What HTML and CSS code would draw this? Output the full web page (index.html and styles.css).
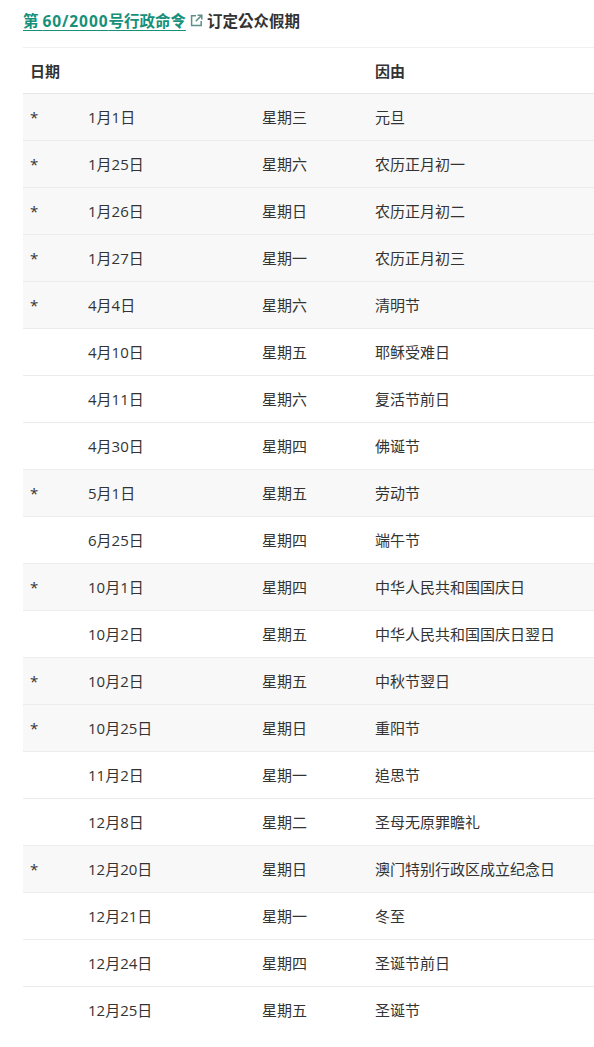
FILE: index.html
```html
<!DOCTYPE html>
<html lang="zh-Hant">
<head>
<meta charset="utf-8">
<link rel="stylesheet" href="styles.css">
</head>
<body>
<div class="page">
  <div class="title">
    <a class="law" href="#">第 <span class="num">60/2000</span>号行政命令</a><svg class="ext" viewBox="0 0 13 13" width="13" height="13"><path d="M6 1.8H1.6v9.6h9.6V7" fill="none" stroke="currentColor" stroke-width="1.5"/><path d="M7.6 1.2h4.2v4.2" fill="none" stroke="currentColor" stroke-width="1.5"/><path d="M11.6 1.4L5.8 7.2" stroke="currentColor" stroke-width="1.5"/></svg><span class="rest">订定公众假期</span>
  </div>
  <table class="holidays">
    <colgroup>
      <col class="c1"><col class="c2"><col class="c3"><col class="c4">
    </colgroup>
    <thead>
      <tr><th colspan="3">日期</th><th>因由</th></tr>
    </thead>
    <tbody>
      <tr class="hl"><td>*</td><td>1月1日</td><td>星期三</td><td>元旦</td></tr>
      <tr class="hl"><td>*</td><td>1月25日</td><td>星期六</td><td>农历正月初一</td></tr>
      <tr class="hl"><td>*</td><td>1月26日</td><td>星期日</td><td>农历正月初二</td></tr>
      <tr class="hl"><td>*</td><td>1月27日</td><td>星期一</td><td>农历正月初三</td></tr>
      <tr class="hl"><td>*</td><td>4月4日</td><td>星期六</td><td>清明节</td></tr>
      <tr><td></td><td>4月10日</td><td>星期五</td><td>耶稣受难日</td></tr>
      <tr><td></td><td>4月11日</td><td>星期六</td><td>复活节前日</td></tr>
      <tr><td></td><td>4月30日</td><td>星期四</td><td>佛诞节</td></tr>
      <tr class="hl"><td>*</td><td>5月1日</td><td>星期五</td><td>劳动节</td></tr>
      <tr><td></td><td>6月25日</td><td>星期四</td><td>端午节</td></tr>
      <tr class="hl"><td>*</td><td>10月1日</td><td>星期四</td><td>中华人民共和国国庆日</td></tr>
      <tr><td></td><td>10月2日</td><td>星期五</td><td>中华人民共和国国庆日翌日</td></tr>
      <tr class="hl"><td>*</td><td>10月2日</td><td>星期五</td><td>中秋节翌日</td></tr>
      <tr class="hl"><td>*</td><td>10月25日</td><td>星期日</td><td>重阳节</td></tr>
      <tr><td></td><td>11月2日</td><td>星期一</td><td>追思节</td></tr>
      <tr><td></td><td>12月8日</td><td>星期二</td><td>圣母无原罪瞻礼</td></tr>
      <tr class="hl"><td>*</td><td>12月20日</td><td>星期日</td><td>澳门特别行政区成立纪念日</td></tr>
      <tr><td></td><td>12月21日</td><td>星期一</td><td>冬至</td></tr>
      <tr><td></td><td>12月24日</td><td>星期四</td><td>圣诞节前日</td></tr>
      <tr><td></td><td>12月25日</td><td>星期五</td><td>圣诞节</td></tr>
    </tbody>
  </table>
</div>
</body>
</html>
```
FILE: styles.css
```css
html, body {
  margin: 0;
  padding: 0;
  background: #fff;
}
body {
  font-family: "Open Sans", "Noto Sans CJK SC", sans-serif;
  color: #333;
  font-size: 15px;
}
.page {
  padding: 8px 0 0 23px;
}
.title {
  display: flex;
  align-items: center;
  height: 24px;
  font-weight: 700;
  font-size: 15.5px;
}
.law {
  color: #17907a;
  text-decoration: underline;
  text-underline-offset: 3px;
}
.num {
  letter-spacing: 0.9px;
}
.ext {
  color: #5e8f88;
  margin: 1px 4px 0 4px;
}
.rest {
  color: #333;
}
.holidays {
  margin-top: 15px;
  width: 571px;
  border-collapse: collapse;
  table-layout: fixed;
}
.c1 { width: 58px; }
.c2 { width: 174px; }
.c3 { width: 113px; }
.c4 { width: 226px; }
.holidays th {
  text-align: left;
  font-weight: 700;
  padding: 12px 7px 11px;
  line-height: 22px;
  border-top: 1px solid #f0f0f0;
  border-bottom: 1px solid #e6e6e6;
}
.holidays td {
  padding: 12px 7px;
  line-height: 22px;
  border-top: 1px solid #ececec;
  white-space: nowrap;
}
.holidays tbody tr:first-child td {
  border-top: 1px solid #e6e6e6;
}
.holidays tr.hl td {
  background: #f8f8f8;
}
```
